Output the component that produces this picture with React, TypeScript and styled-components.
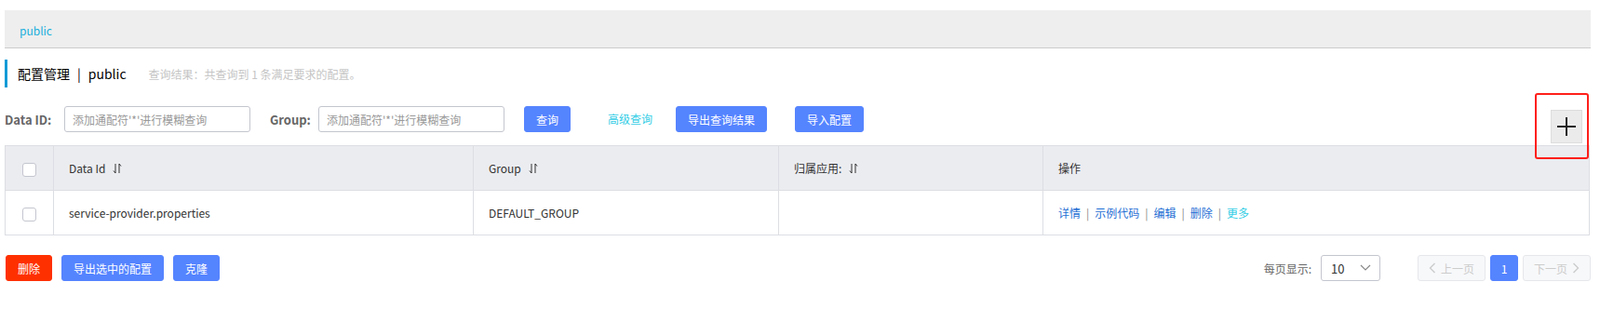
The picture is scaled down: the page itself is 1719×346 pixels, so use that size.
import React from 'react';
import styled, { createGlobalStyle, css } from 'styled-components';

const GlobalStyle = createGlobalStyle`
  body {
    margin: 0;
    background: #fff;
    font-family: "Noto Sans CJK SC", "Noto Sans", sans-serif;
    font-size: 12px;
    color: #333;
  }
  * { box-sizing: border-box; }
`;

const PRIMARY = '#5584ff';

export default function App() {
  return (
    <Page>
      <GlobalStyle />
      <Breadcrumb>
        <Crumb>public</Crumb>
      </Breadcrumb>

      <TitleBar>
        <Title>
          配置管理<TitleSep>|</TitleSep>public
        </Title>
        <Summary>查询结果：共查询到 1 条满足要求的配置。</Summary>
      </TitleBar>

      <SearchRow>
        <FormItem>
          <Label $width={64}>Data ID:</Label>
          <Input placeholder="添加通配符'*'进行模糊查询" />
        </FormItem>
        <FormItem>
          <Label $width={52}>Group:</Label>
          <Input placeholder="添加通配符'*'进行模糊查询" />
        </FormItem>
        <Button $gap={40}>查询</Button>
        <TextLink $gap={25}>高级查询</TextLink>
        <Button $gap={30}>导出查询结果</Button>
        <Button>导入配置</Button>
        <AddWrap>
          <AddButton>
            <svg width="20" height="20" viewBox="0 0 20 20">
              <path d="M10 0v20M0 10h20" stroke="#222" strokeWidth="2" />
            </svg>
          </AddButton>
          <Highlight />
        </AddWrap>
      </SearchRow>

      <Table>
        <colgroup>
          <col style={{ width: 52 }} />
          <col style={{ width: 451 }} />
          <col style={{ width: 328 }} />
          <col style={{ width: 284 }} />
          <col />
        </colgroup>
        <thead>
          <tr>
            <Th $center><Checkbox /></Th>
            <Th>Data Id<SortIcon /></Th>
            <Th>Group<SortIcon /></Th>
            <Th>归属应用:<SortIcon /></Th>
            <Th>操作</Th>
          </tr>
        </thead>
        <tbody>
          <tr>
            <Td $center><Checkbox /></Td>
            <Td>service-provider.properties</Td>
            <Td>DEFAULT_GROUP</Td>
            <Td></Td>
            <Td>
              <OpLink>详情</OpLink>
              <OpSep>|</OpSep>
              <OpLink>示例代码</OpLink>
              <OpSep>|</OpSep>
              <OpLink>编辑</OpLink>
              <OpSep>|</OpSep>
              <OpLink>删除</OpLink>
              <OpSep>|</OpSep>
              <OpLink $more>更多</OpLink>
            </Td>
          </tr>
        </tbody>
      </Table>

      <Footer>
        <BatchActions>
          <Button $danger>删除</Button>
          <Button>导出选中的配置</Button>
          <Button>克隆</Button>
        </BatchActions>
        <PagerArea>
          <PageSizeLabel>每页显示:</PageSizeLabel>
          <Select>
            <span>10</span>
            <svg width="12" height="8" viewBox="0 0 12 8">
              <path d="M1 1l5 5 5-5" fill="none" stroke="#888" strokeWidth="1.2" />
            </svg>
          </Select>
          <Pager>
            <PageButton disabled>
              <svg width="8" height="12" viewBox="0 0 8 12">
                <path d="M6.5 1L1.5 6l5 5" fill="none" stroke="#ccc" strokeWidth="1.4" />
              </svg>
              上一页
            </PageButton>
            <PageButton $current>1</PageButton>
            <PageButton disabled>
              下一页
              <svg width="8" height="12" viewBox="0 0 8 12">
                <path d="M1.5 1l5 5-5 5" fill="none" stroke="#ccc" strokeWidth="1.4" />
              </svg>
            </PageButton>
          </Pager>
        </PagerArea>
      </Footer>
    </Page>
  );
}

function SortIcon() {
  return (
    <SortSvg width="10" height="12" viewBox="0 0 10 12">
      <path d="M3 1v10M3 11L1 8.5M7 11V1M7 1l2 2.5" fill="none" stroke="#333" strokeWidth="1" />
    </SortSvg>
  );
}

const Page = styled.div`
  padding: 11px 10px 0 5px;
`;

const Breadcrumb = styled.div`
  height: 41px;
  background: #eee;
  border-bottom: 1px solid #ccc;
  display: flex;
  align-items: center;
  padding: 3px 0 0 16px;
`;

const Crumb = styled.span`
  color: #1aafdc;
  font-size: 12px;
`;

const TitleBar = styled.div`
  margin-top: 12px;
  height: 30px;
  border-left: 3px solid #0f9bd7;
  display: flex;
  align-items: center;
  padding-left: 11px;
`;

const Title = styled.span`
  font-size: 14px;
  color: #000;
`;

const TitleSep = styled.span`
  margin: 0 8px;
`;

const Summary = styled.span`
  margin-left: 24px;
  font-size: 12px;
  color: #c5c5c5;
`;

const SearchRow = styled.div`
  margin-top: 20px;
  height: 40px;
  display: flex;
  align-items: flex-start;
`;

const FormItem = styled.div`
  display: flex;
  align-items: center;
  margin-right: 21px;
`;

const Label = styled.label<{ $width: number }>`
  width: ${p => p.$width}px;
  font-size: 13px;
  font-weight: bold;
  color: #666;
`;

const Input = styled.input`
  width: 200px;
  height: 28px;
  border: 1px solid #c4c6cf;
  border-radius: 3px;
  padding: 0 8px;
  font-family: inherit;
  font-size: 12px;
  color: #333;
  outline: none;
  &::placeholder { color: #999; }
`;

const Button = styled.button<{ $gap?: number; $danger?: boolean }>`
  height: 28px;
  padding: 0 12px;
  border: 1px solid ${p => (p.$danger ? '#ff3000' : PRIMARY)};
  background: ${p => (p.$danger ? '#ff3000' : PRIMARY)};
  color: #fff;
  border-radius: 3px;
  font-family: inherit;
  font-size: 12px;
  white-space: nowrap;
  margin-right: ${p => p.$gap ?? 0}px;
`;

const TextLink = styled.span<{ $gap?: number }>`
  height: 28px;
  line-height: 28px;
  color: #33cde5;
  font-size: 12px;
  margin-right: ${p => p.$gap ?? 0}px;
`;

const AddWrap = styled.div`
  position: relative;
  margin: 4px 9px 0 auto;
`;

const AddButton = styled.div`
  width: 34px;
  height: 36px;
  background: #ebebeb;
  border: 1px solid #ddd;
  display: flex;
  align-items: center;
  justify-content: center;
`;

const Highlight = styled.div`
  position: absolute;
  top: -18px;
  left: -17px;
  right: -7px;
  bottom: -17px;
  border: 2px solid #ff1f1a;
  border-radius: 3px;
`;

const Table = styled.table`
  margin-top: 2px;
  width: 1703px;
  border-collapse: collapse;
  table-layout: fixed;
`;

const cell = css<{ $center?: boolean }>`
  height: 48px;
  border: 1px solid #dcdee3;
  padding: 0 16px;
  font-size: 12px;
  color: #333;
  text-align: ${p => (p.$center ? 'center' : 'left')};
  vertical-align: middle;
  font-weight: normal;
  white-space: nowrap;
`;

const Th = styled.th<{ $center?: boolean }>`
  ${cell};
  background: #ebecf0;
`;

const Td = styled.td<{ $center?: boolean }>`
  ${cell};
  background: #fff;
`;

const Checkbox = styled.span`
  display: inline-block;
  width: 15px;
  height: 15px;
  border: 1px solid #c4c6cf;
  border-radius: 3px;
  background: #fff;
  vertical-align: middle;
`;

const SortSvg = styled.svg`
  margin-left: 8px;
  vertical-align: -1px;
`;

const OpLink = styled.a<{ $more?: boolean }>`
  color: ${p => (p.$more ? '#33cde5' : '#1f6fd4')};
  text-decoration: none;
`;

const OpSep = styled.span`
  color: #888;
  margin: 0 6px;
`;

const Footer = styled.div`
  margin-top: 21px;
  display: flex;
  justify-content: space-between;
  align-items: center;
`;

const BatchActions = styled.div`
  display: flex;
  gap: 10px;
  padding-left: 1px;
`;

const PagerArea = styled.div`
  display: flex;
  align-items: center;
`;

const PageSizeLabel = styled.span`
  color: #666;
  font-size: 12px;
  margin-right: 10px;
`;

const Select = styled.div`
  width: 64px;
  height: 28px;
  border: 1px solid #c4c6cf;
  border-radius: 3px;
  display: flex;
  align-items: center;
  justify-content: space-between;
  padding: 0 9px 0 10px;
  font-size: 13px;
  color: #333;
  margin-right: 40px;
`;

const Pager = styled.div`
  display: flex;
  gap: 5px;
`;

const PageButton = styled.button<{ $current?: boolean }>`
  height: 28px;
  min-width: 30px;
  padding: 0 ${p => (p.$current ? 0 : 11)}px;
  display: flex;
  align-items: center;
  justify-content: center;
  gap: 5px;
  border-radius: 3px;
  font-family: inherit;
  font-size: 12px;
  border: 1px solid ${p => (p.$current ? PRIMARY : '#e6e7eb')};
  background: ${p => (p.$current ? PRIMARY : '#f7f8fa')};
  color: ${p => (p.$current ? '#fff' : '#ccc')};
`;
